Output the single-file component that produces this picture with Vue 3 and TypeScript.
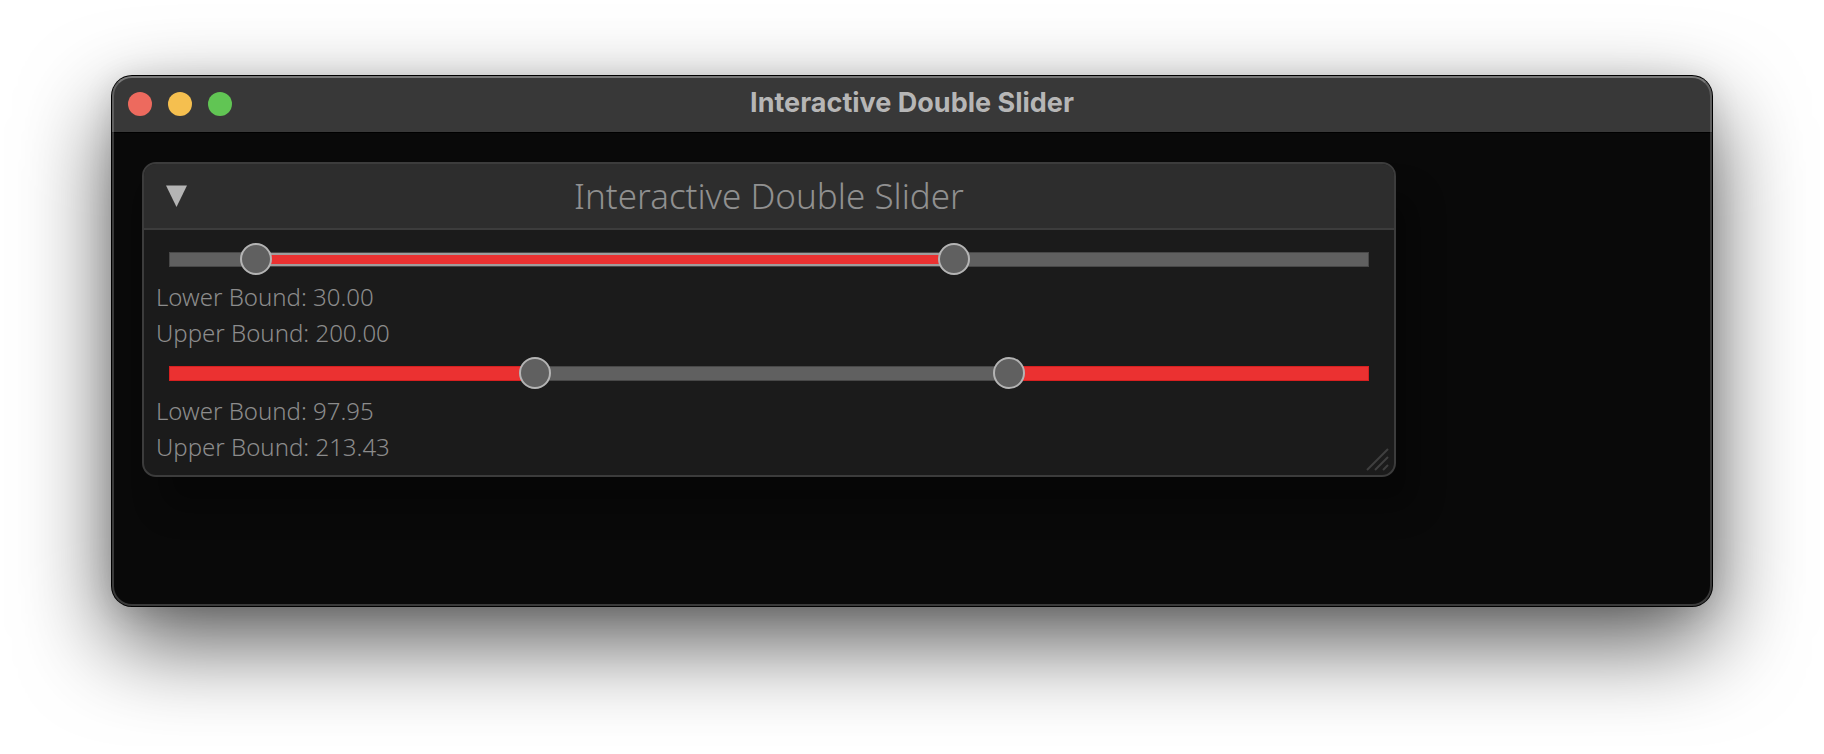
<script setup lang="ts">
import { reactive, ref } from 'vue'

interface DoubleSlider {
  id: string
  lower: number
  upper: number
  inverted: boolean
}

const MIN = 10
const MAX = 300
const open = ref(true)

const sliders = reactive<DoubleSlider[]>([
  { id: 'inner', lower: 30, upper: 200, inverted: false },
  { id: 'outer', lower: 97.95, upper: 213.43, inverted: true },
])

const at = (value: number): string => {
  const share = (value - MIN) / (MAX - MIN)
  return `calc(5px + (100% - 10px) * ${share.toFixed(5)})`
}

const width = (from: number, to: number): string =>
  `calc((100% - 10px) * ${((to - from) / (MAX - MIN)).toFixed(5)})`

const setLower = (s: DoubleSlider, e: Event) => {
  const el = e.target as HTMLInputElement
  s.lower = Math.min(Number(el.value), s.upper)
  el.value = String(s.lower)
}

const setUpper = (s: DoubleSlider, e: Event) => {
  const el = e.target as HTMLInputElement
  s.upper = Math.max(Number(el.value), s.lower)
  el.value = String(s.upper)
}
</script>

<template>
  <main class="desktop">
    <section class="window">
      <header class="titlebar">
        <div class="lights">
          <button type="button" class="light close" aria-label="Close"></button>
          <button type="button" class="light minimize" aria-label="Minimize"></button>
          <button type="button" class="light zoom" aria-label="Zoom"></button>
        </div>
        <h1 class="title">Interactive Double Slider</h1>
      </header>

      <div class="canvas">
        <section class="panel">
          <header class="panel-head" :class="{ folded: !open }">
            <button
              type="button"
              class="collapse"
              aria-label="Collapse"
              :aria-expanded="open"
              @click="open = !open"
            >
              <svg viewBox="0 0 22 22" width="22" height="22" aria-hidden="true">
                <path d="M0 0.5H21L10.5 22Z" fill="#b4b4b4" />
              </svg>
            </button>
            <h2 class="panel-title">Interactive Double Slider</h2>
          </header>

          <div v-if="open" class="panel-body">
            <div v-for="s in sliders" :key="s.id" class="group">
              <div class="slider">
                <div class="track">
                  <span
                    v-if="!s.inverted"
                    class="span"
                    :style="{ left: at(s.lower), width: width(s.lower, s.upper) }"
                  ></span>
                  <template v-else>
                    <span class="side start" :style="{ width: at(s.lower) }"></span>
                    <span class="side end" :style="{ left: at(s.upper) }"></span>
                  </template>
                </div>
                <input
                  :id="`${s.id}-lower`"
                  class="range"
                  type="range"
                  :min="MIN"
                  :max="MAX"
                  step="0.01"
                  :value="s.lower"
                  @input="setLower(s, $event)"
                />
                <input
                  :id="`${s.id}-upper`"
                  class="range"
                  type="range"
                  :min="MIN"
                  :max="MAX"
                  step="0.01"
                  :value="s.upper"
                  @input="setUpper(s, $event)"
                />
              </div>
              <label class="value" :for="`${s.id}-lower`">Lower Bound: {{ s.lower.toFixed(2) }}</label>
              <label class="value" :for="`${s.id}-upper`">Upper Bound: {{ s.upper.toFixed(2) }}</label>
            </div>
          </div>

          <svg v-if="open" class="grip" viewBox="0 0 24 24" width="24" height="24" aria-hidden="true">
            <path d="M2 23L23 2M10 23L23 10M18 23L23 18" fill="none" stroke="#3f3f3f" stroke-width="2" />
          </svg>
        </section>
      </div>
    </section>
  </main>
</template>

<style>
body {
  background: #fff;
}
</style>

<style scoped>
.desktop {
  padding: 76px 112px 140px;
  font-family: "Noto Sans", "Open Sans", sans-serif;
}

.window {
  position: relative;
  border-radius: 20px;
  background: #090909;
  box-shadow:
    0 0 0 1px #000,
    0 36px 90px rgba(0, 0, 0, 0.66),
    0 4px 30px rgba(0, 0, 0, 0.12);
}

.window::after {
  content: "";
  position: absolute;
  inset: 0;
  border: 2px solid rgba(255, 255, 255, 0.2);
  border-top-color: rgba(255, 255, 255, 0.32);
  border-radius: 20px;
  pointer-events: none;
}

.titlebar {
  display: grid;
  grid-template-columns: 1fr auto 1fr;
  align-items: center;
  height: 56px;
  padding: 0 16px;
  box-sizing: border-box;
  border-radius: 20px 20px 0 0;
  background: #383838;
  box-shadow: 0 1px 0 #000;
}

.lights {
  display: flex;
  gap: 16px;
}

.light {
  width: 24px;
  height: 24px;
  padding: 0;
  border: 0;
  border-radius: 50%;
}

.close {
  background: #ed6a5e;
}

.minimize {
  background: #f5bf4f;
}

.zoom {
  background: #61c554;
}

.title {
  margin: 0;
  padding-bottom: 2px;
  font: 700 27px/52px Inter, "Liberation Sans", sans-serif;
  color: #b6b6b6;
}

.canvas {
  padding: 30px 30px 129px;
}

.panel {
  position: relative;
  width: calc(100% - 286px);
  box-sizing: border-box;
  border: 2px solid #3c3c3c;
  border-radius: 14px;
  background: #1b1b1b;
  box-shadow: 20px 32px 30px rgba(0, 0, 0, 0.3);
}

.panel-head {
  display: grid;
  grid-template-columns: 1fr auto 1fr;
  align-items: center;
  height: 66px;
  padding: 0 22px;
  box-sizing: border-box;
  border-bottom: 2px solid #3c3c3c;
  border-radius: 12px 12px 0 0;
  background: #2d2d2d;
}

.panel-head.folded {
  border-bottom: 0;
  border-radius: 12px;
}

.collapse {
  display: flex;
  width: 22px;
  padding: 0;
  border: 0;
  background: none;
}

.panel-title {
  margin: 0;
  font-size: 35px;
  font-weight: 300;
  line-height: 64px;
  color: #909090;
}

.panel-body {
  padding: 9px 12px 8px;
}

.group {
  display: flex;
  flex-direction: column;
  align-items: flex-start;
  padding-bottom: 2px;
}

.slider {
  position: relative;
  display: flex;
  align-items: center;
  align-self: stretch;
  height: 40px;
  padding: 0 13px;
}

.track {
  position: relative;
  flex: 1;
  height: 15px;
  background: #606060;
  box-shadow: inset 0 0 0 1px #484848;
}

.span {
  position: absolute;
  top: 1px;
  bottom: 1px;
  box-sizing: border-box;
  border: solid #a09c9c;
  border-width: 2px 0;
  background: #eb3131;
}

.side {
  position: absolute;
  top: 0;
  bottom: 0;
  background: #eb3131;
  box-shadow: inset 0 0 0 1px #d82020;
}

.start {
  left: 0;
}

.end {
  right: 0;
}

.range {
  position: absolute;
  top: 4px;
  left: 2px;
  width: calc(100% - 4px);
  height: 32px;
  margin: 0;
  appearance: none;
  background: none;
  pointer-events: none;
}

.range::-webkit-slider-runnable-track {
  height: 32px;
  background: none;
}

.range::-webkit-slider-thumb {
  appearance: none;
  width: 32px;
  height: 32px;
  box-sizing: border-box;
  border: 2px solid #b4b4b4;
  border-radius: 50%;
  background: #606060;
  pointer-events: auto;
}

.value {
  font-size: 24px;
  font-weight: 350;
  line-height: 36px;
  color: #8c8c8c;
}

.grip {
  position: absolute;
  right: 5px;
  bottom: 4px;
}
</style>
